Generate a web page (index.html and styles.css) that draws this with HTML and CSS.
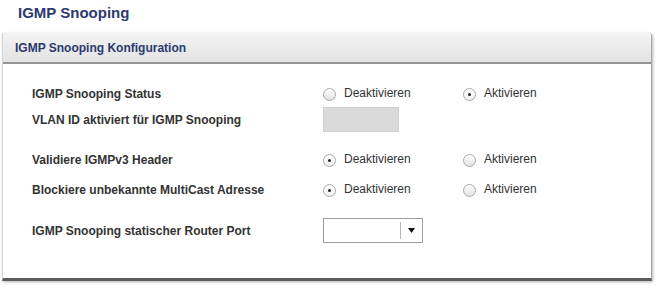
FILE: index.html
```html
<!DOCTYPE html>
<html lang="de">
<head>
<meta charset="utf-8">
<title>IGMP Snooping</title>
<link rel="stylesheet" href="styles.css">
</head>
<body>
<h1 class="page-title">IGMP Snooping</h1>
<section class="panel">
  <div class="panel-head">IGMP Snooping Konfiguration</div>
  <div class="panel-body">
    <div class="row row-a">
      <div class="label">IGMP Snooping Status</div>
      <label class="opt"><span class="radio"></span><span class="opt-text">Deaktivieren</span></label>
      <label class="opt"><span class="radio checked"></span><span class="opt-text">Aktivieren</span></label>
    </div>
    <div class="row row-b">
      <div class="label">VLAN ID aktiviert für IGMP Snooping</div>
      <div class="vlan-input"></div>
    </div>
    <div class="row row-c">
      <div class="label">Validiere IGMPv3 Header</div>
      <label class="opt"><span class="radio checked"></span><span class="opt-text">Deaktivieren</span></label>
      <label class="opt"><span class="radio"></span><span class="opt-text">Aktivieren</span></label>
    </div>
    <div class="row row-d">
      <div class="label">Blockiere unbekannte MultiCast Adresse</div>
      <label class="opt"><span class="radio checked"></span><span class="opt-text">Deaktivieren</span></label>
      <label class="opt"><span class="radio"></span><span class="opt-text">Aktivieren</span></label>
    </div>
    <div class="row row-e">
      <div class="label">IGMP Snooping statischer Router Port</div>
      <div class="select">
        <span class="select-value"></span>
        <span class="select-btn"><svg width="7" height="5" viewBox="0 0 7 5"><path d="M0 0H7L3.5 5Z" fill="#111"/></svg></span>
      </div>
    </div>
  </div>
</section>
</body>
</html>
```

FILE: styles.css
```css
html, body {
  margin: 0;
  padding: 0;
  background: #ffffff;
}
body {
  width: 663px;
  height: 293px;
  overflow: hidden;
  font-family: "Liberation Sans", Arial, sans-serif;
  font-size: 12px;
  color: #333333;
}
.page-title {
  margin: 0;
  padding: 4px 0 0 18px;
  height: 29px;
  box-sizing: border-box;
  font-size: 15px;
  line-height: 18px;
  font-weight: bold;
  color: #2c3a6e;
}
.panel {
  margin: 4px 0 0 2px;
  width: 650px;
  box-sizing: border-box;
  border-left: 1px solid #d4d4d4;
  border-right: 1px solid #a8a8a8;
  border-bottom: 3px solid #5c5c5c;
  border-top-right-radius: 3px;
  box-shadow: 1px 1px 3px rgba(0,0,0,0.3);
}
.panel-head {
  height: 31px;
  box-sizing: border-box;
  padding-left: 12px;
  display: flex;
  align-items: center;
  padding-top: 1px;
  background: linear-gradient(#f3f3f3, #e3e3e3);
  border-bottom: 2px solid #959595;
  border-top-right-radius: 3px;
  font-weight: bold;
  font-size: 12px;
  color: #2b3a6f;
}
.panel-body {
  padding: 17px 0 35px 0;
}
.row {
  display: flex;
  align-items: center;
}
.label {
  width: 291px;
  padding-left: 29px;
  box-sizing: content-box;
  font-weight: bold;
  color: #333333;
}
.row-a { height: 26px; }
.row-b { height: 25px; }
.row-c { height: 26px; margin-top: 15px; }
.row-d { height: 26px; margin-top: 4px; }
.row-e { height: 25px; margin-top: 15px; }
.opt {
  width: 140px;
  display: flex;
  align-items: center;
  gap: 8px;
}
.opt-text {
  position: relative;
  top: -1px;
}
.radio {
  width: 13px;
  height: 13px;
  box-sizing: border-box;
  border-radius: 50%;
  border: 1px solid #a9a9a9;
  background: linear-gradient(#ffffff, #e2e2e2);
  display: flex;
  align-items: center;
  justify-content: center;
}
.radio.checked {
  background: linear-gradient(#ffffff, #f0f0f0);
}
.radio.checked::after {
  content: "";
  width: 3px;
  height: 3px;
  border-radius: 50%;
  background: #222222;
}
.vlan-input {
  width: 76px;
  height: 25px;
  box-sizing: border-box;
  background: #dadada;
  border: 1px solid #d0d0d0;
}
.select {
  width: 100px;
  height: 25px;
  box-sizing: border-box;
  border: 1px solid #9c9c9c;
  background: #ffffff;
  display: flex;
  align-items: center;
}
.select-value {
  flex: 1;
  height: 17px;
  border-right: 1px solid #b4b4b4;
}
.select-btn {
  width: 21px;
  display: flex;
  justify-content: center;
  align-items: center;
}
.select-btn svg {
  display: block;
}
```
